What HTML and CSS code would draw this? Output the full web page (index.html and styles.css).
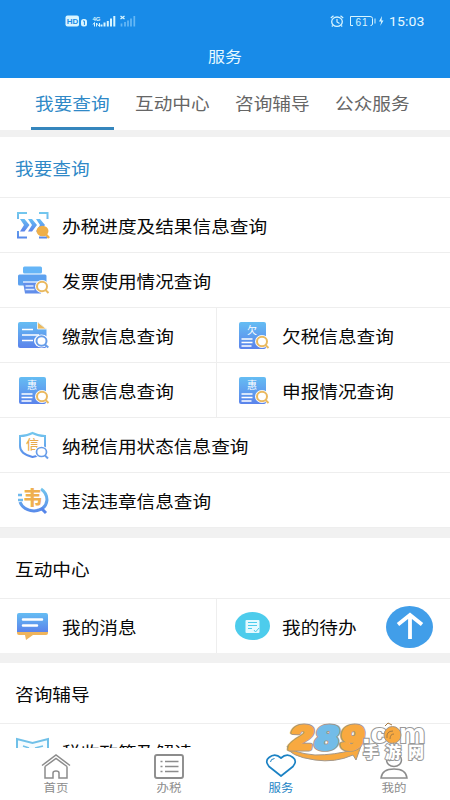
FILE: index.html
```html
<!DOCTYPE html>
<html lang="zh-CN">
<head>
<meta charset="utf-8">
<meta name="viewport" content="width=device-width, initial-scale=1">
<title>服务</title>
<link rel="stylesheet" href="styles.css">
</head>
<body>
<svg class="defs" width="0" height="0">
  <defs>
    <linearGradient id="blue" x1="0" y1="0" x2="0" y2="1"><stop offset="0" stop-color="#65bdf3"/><stop offset="1" stop-color="#5b83eb"/></linearGradient>
    <linearGradient id="line" gradientUnits="userSpaceOnUse" x1="0" y1="2" x2="0" y2="30"><stop offset="0" stop-color="#75cbee"/><stop offset="1" stop-color="#5686ea"/></linearGradient>
    <g id="lens"><ellipse cx="27" cy="22.5" rx="7" ry="6.5" fill="#fff"/><ellipse cx="27" cy="22.5" rx="5" ry="4.7" fill="#fff" stroke="#e9b960" stroke-width="2"/><path d="M30.5 26l3 3" stroke="#e9b960" stroke-width="2"/></g>
    <g id="doc"><rect x="4" y="3" width="27" height="27" rx="2" fill="url(#blue)"/><path d="M6.5 20h11M6.5 23.5h11M6.5 27h10" stroke="#fff" stroke-width="1.5"/><use href="#lens"/></g>
  </defs>
</svg>
<div class="app">
  <header class="top">
    <div class="status">
      <svg class="signals" width="72" height="14" viewBox="0 0 72 14">
        <rect x=".5" y="1.500" width="13.5" height="11" rx="2" fill="#d8f5ff"/>
        <text x="1.7" y="10" class="hd">HD</text>
        <rect x="16" y="5" width="6" height="7.5" rx="2.5" fill="#d8f5ff"/><path d="M18 7h1.4v4" stroke="#188be8" fill="none"/>
        <text x="27.5" y="6.500" class="tiny">4G</text>
        <path d="M28 10.500l1.500-2v4m2 0v-3.500l3 3.500v-3.500" stroke="#d8f5ff" fill="none" stroke-width="1"/>
        <path d="M36.500 12.500v-2M39.500 12.500v-4M42.800 12.500V7M46 12.500V4.500M49.300 12.500V2" stroke="#d8f5ff" stroke-width="2"/>
        <path d="M55.500 2l4 3m0-3l-4 3" stroke="#d8f5ff" stroke-width="1.300"/>
        <path d="M56.500 12.500v-3M60 12.500V8M63 12.500V6.500M66 12.500V4.500M69.300 12.500V2" stroke="#67b8f5" stroke-width="1.700"/>
      </svg>
      <svg class="power" width="55" height="14" viewBox="0 0 55 14" fill="none" stroke="#d8f5ff">
        <ellipse cx="7" cy="7.700" rx="5.300" ry="4.700" stroke-width="1.300"/><path d="M7 5V8l2.500 1.500M.8 4L3.500 1.700M13.200 4L10.500 1.700M2.800 11.500l-1 1M11.200 11.500l1 1" stroke-width="1.200"/>
        <path d="M23 2.500h-2.500v9H23M23 2.500h17q2.500 0 2.500 2v5.500q0 1.500-2 1.500M45 4.500v5"/><text x="25.500" y="11.500" class="battery">61</text>
        <path d="M52 2l-3 5.500h2.200l-1 4.500 3.300-5.500h-2z" fill="#d8f5ff" stroke="none"/>
      </svg>
      <span class="clock">15:03</span>
    </div>
    <h1 class="title"><span class="wide">服务</span></h1>
  </header>
  <nav class="tabs">
    <a class="tab active"><span class="wide">我要查询</span></a>
    <a class="tab"><span class="wide">互动中心</span></a>
    <a class="tab"><span class="wide">咨询辅导</span></a>
    <a class="tab"><span class="wide">公众服务</span></a>
  </nav>
  <main class="content">
    <section class="group first">
      <h2 class="heading current"><span class="wide">我要查询</span></h2>
      <div class="row"><div class="cell">
        <svg class="icon" viewBox="0 0 36 32"><path d="M3 10V4h9M24 4h8.500v6M3 22v6.500h9M24 28.500h8" fill="none" stroke="url(#line)" stroke-width="2"/><path d="M5 10H9.500l5 6-5 6.500H5l4-6.500zM13 10h4l5 6-5 6.500h-4l4-6.500zM21 10h4l5 6-5 6.500h-4l4-6.500z" fill="url(#blue)"/><ellipse cx="27.500" cy="22" rx="6" ry="5.300" fill="#efaf48"/><path d="M30.500 25l3.500 4" stroke="#efaf48" stroke-width="2.500"/></svg>
        <span class="wide">办税进度及结果信息查询</span></div></div>
      <div class="row"><div class="cell">
        <svg class="icon" viewBox="0 0 36 32"><rect x="8" y="2.500" width="19" height="7" rx="1.500" fill="#65b5f7"/><rect x="3" y="10.500" width="28.500" height="11" rx="1.500" fill="#5da1ef"/><path d="M8 18h18v11.500H10z" fill="#628eea"/><path d="M8 18h15M10.500 22h8M10.500 25.500h9" stroke="#dceaff" stroke-width="1.300"/><use href="#lens"/></svg>
        <span class="wide">发票使用情况查询</span></div></div>
      <div class="row split">
        <div class="cell">
          <svg class="icon" viewBox="0 0 36 32"><path d="M5 3h18l8.500 7v17q0 2-2 2H5q-2 0-2-2V5q0-2 2-2z" fill="url(#blue)"/><path d="M22.500 3v7h9z" fill="#e9b960" stroke="#fff" stroke-width=".8"/><path d="M7 10.500h11M7 16h17M7 21.500h11" stroke="#fff" stroke-width="1.700"/><ellipse cx="26.500" cy="22" rx="7.500" ry="6.500" fill="#fff"/><ellipse cx="26.500" cy="22" rx="5" ry="4.700" fill="#fff" stroke="#679de9" stroke-width="2"/><path d="M30 25.500l3.300 3" stroke="#679de9" stroke-width="2"/></svg>
          <span class="wide">缴款信息查询</span></div>
        <div class="cell">
          <svg class="icon" viewBox="0 0 36 32"><use href="#doc"/><text x="12" y="14.500" class="mark">欠</text></svg>
          <span class="wide">欠税信息查询</span></div>
      </div>
      <div class="row split">
        <div class="cell">
          <svg class="icon" viewBox="0 0 36 32"><use href="#doc"/><text x="12" y="14.500" class="mark">惠</text></svg>
          <span class="wide">优惠信息查询</span></div>
        <div class="cell">
          <svg class="icon" viewBox="0 0 36 32"><use href="#doc"/><text x="12" y="14.500" class="mark">惠</text></svg>
          <span class="wide">申报情况查询</span></div>
      </div>
      <div class="row"><div class="cell">
        <svg class="icon" viewBox="0 0 36 32"><path d="M17.500 4Q23 7 30 7v11q0 8-12.500 10Q5 25 5 17V7q7 0 12.500-3z" fill="none" stroke="url(#line)" stroke-width="2"/><text x="11" y="19.500" class="credit">信</text><ellipse cx="26.500" cy="23" rx="7" ry="6" fill="#fff"/><ellipse cx="26.500" cy="23" rx="5" ry="4.500" fill="#fff" stroke="#679de9" stroke-width="1.700"/><path d="M30 26.500l3 3" stroke="#679de9" stroke-width="2"/></svg>
        <span class="wide">纳税信用状态信息查询</span></div></div>
      <div class="row"><div class="cell">
        <svg class="icon" viewBox="0 0 36 32"><path d="M26 5Q32 9 32 16q-1 10-13 11Q8 26 5 18" fill="none" stroke="url(#line)" stroke-width="3"/><path d="M3 11h4M3 16h5" stroke="#6fb9ed" stroke-width="2.500"/><path d="M26 24l5 5" stroke="#5686ea" stroke-width="3"/><text x="8" y="21" class="violate">韦</text></svg>
        <span class="wide">违法违章信息查询</span></div></div>
    </section>
    <section class="group">
      <h2 class="heading"><span class="wide">互动中心</span></h2>
      <div class="row split">
        <div class="cell">
          <svg class="icon" viewBox="0 0 36 32"><path d="M2 19h31v4q0 2-2 2H18l-7 5-1-5H4q-2 0-2-2z" fill="#efb45b"/><path d="M4 3h27q2 0 2 2v17H2V5q0-2 2-2z" fill="url(#blue)"/><path d="M8 9.500h19M8 15.500h14" stroke="#fff" stroke-width="2.500" stroke-linecap="round"/></svg>
          <span class="wide">我的消息</span></div>
        <div class="cell">
          <svg class="icon" viewBox="0 0 36 32"><ellipse cx="17.500" cy="16" rx="17.500" ry="14" fill="#4dccec"/><rect x="10.500" y="10" width="14" height="13" rx="1" fill="#e4faff"/><path d="M13 12.500h9M13 15.500h9M13 18.500h4M19 20l1.500 2 3.500-4" stroke="#4dccec" fill="none" stroke-width="1"/></svg>
          <span class="wide">我的待办</span></div>
      </div>
    </section>
    <section class="group">
      <h2 class="heading"><span class="wide">咨询辅导</span></h2>
      <div class="row"><div class="cell">
        <svg class="icon" viewBox="0 0 36 32"><path d="M2 28V4l15.500 4L33 4v24l-15.500 2z" fill="#f5fcff" stroke="#70c0e8" stroke-width="2"/><path d="M8 11l6 2M28 11l-8 2" stroke="#70c0e8" stroke-width="1.500"/></svg>
        <span class="wide">税收政策及解读</span></div></div>
    </section>
  </main>
  <footer class="bottom">
    <a class="item"><svg class="glyph" viewBox="0 0 32 26"><path d="M2 12.500L16 2l14 10.500M5 13.500V25h8v-5q0-2 3-2t3 2v5h8V13.500M5 13.500L16 5.500l11 8" fill="none" stroke="currentColor" stroke-width="1.500"/></svg><span class="wide">首页</span></a>
    <a class="item"><svg class="glyph" viewBox="0 0 32 26"><rect x="2" y="2" width="28" height="23" rx="2" fill="none" stroke="currentColor" stroke-width="1.900"/><path d="M7.500 8.500h2M12 8.500h13.500M7.500 13.500h2M12 13.500h13.500M7.500 18.500h2M12 18.500h13.500" stroke="currentColor" stroke-width="1.500"/></svg><span class="wide">办税</span></a>
    <a class="item on"><svg class="glyph" viewBox="0 0 32 26"><path d="M16 23L4 13.500Q-.500 8 4 4.500 10-.500 16 5q6-5.500 12-.500 4.500 3.500 0 9z" fill="none" stroke="currentColor" stroke-width="1.700" stroke-linejoin="round"/><path d="M5.500 9q0-3 4-3.500" fill="none" stroke="currentColor"/></svg><span class="wide">服务</span></a>
    <a class="item"><svg class="glyph" viewBox="0 0 32 26"><ellipse cx="16" cy="7" rx="7.500" ry="6.500" fill="none" stroke="currentColor" stroke-width="1.500"/><path d="M3 25q1-9 13-9t13 9z" fill="none" stroke="currentColor" stroke-width="1.500"/></svg><span class="wide">我的</span></a>
  </footer>
  <button class="to-top" aria-label="返回顶部"><svg width="47" height="42" viewBox="0 0 47 42"><ellipse cx="23.500" cy="21" rx="23.500" ry="21" fill="#419ee9"/><path d="M24 33V9M12 18.500L24 9l12 9.500" fill="none" stroke="#fff" stroke-width="3.800"/></svg></button>
  <svg class="brand" width="144" height="42" viewBox="0 0 144 42">
    <path d="M2 24q6 7 28 9 20 0 37-5l-3-3 12-1-5 14-3-5Q50 41 30 38 3 34 2 24z" fill="#f8a940" stroke="#a49788"/>
    <g transform="translate(3.500 26.500) skewX(-10) scale(1.220 1)">
      <g class="digits rim"><text>289</text></g>
      <g class="digits"><text><tspan class="amber">2</tspan><tspan class="sky">8</tspan><tspan class="amber">9</tspan></text></g>
    </g>
    <g transform="translate(77 21) scale(1.150 1)"><text class="com">.c</text></g>
    <g transform="translate(114 21) scale(1.100 1)"><text class="com">m</text></g>
    <ellipse cx="107.500" cy="13" rx="8.500" ry="8.500" fill="#f8a940" stroke="#a49788"/><path d="M102 16q-1-7 6-7M105 17q0-5 4-5M100 4l3-3 4 2" fill="none" stroke="#a67a42"/>
    <text y="36" class="site"><tspan x="78">手</tspan><tspan x="100">游</tspan><tspan x="123">网</tspan></text>
  </svg>
</div>
</body>
</html>
```

FILE: styles.css
```css
* { box-sizing: border-box; }
body { margin: 0; background: #fff; font-family: "Noto Sans CJK SC", sans-serif; }
.defs { position: absolute; }
.app { position: relative; width: 450px; height: 800px; overflow: hidden; display: flex; flex-direction: column; color: #080808; font-size: 16.5px; }
.wide { display: inline-block; transform: scaleX(1.13); transform-origin: left center; white-space: nowrap; line-height: 24px; }

.top { height: 78px; flex: none; background: #188be8; color: #e6f9ff; }
.status { height: 43px; padding: 14px 25px 0 65px; display: flex; align-items: flex-start; }
.signals { margin-right: auto; }
.power { margin-right: 4px; }
.clock { width: 36px; font: 13px/16px Roboto, sans-serif; letter-spacing: .1px; transform: scaleX(1.08); transform-origin: left; }
.hd { font: bold 8px "Liberation Sans", sans-serif; fill: #188be8; }
.tiny { font: bold 6px "Liberation Sans", sans-serif; fill: #d8f5ff; }
.battery { font: 10px "Liberation Sans", sans-serif; fill: #d8f5ff; stroke: none; letter-spacing: 1px; }
.title { margin: 0; font-size: 15px; font-weight: 400; line-height: 26px; text-align: center; }
.title .wide, .item .wide { transform-origin: center; }

.tabs { height: 52px; flex: none; padding-left: 31px; display: flex; gap: 17px; color: #666; }
.tab { width: 83px; padding: 13px 0 0 4px; border-bottom: 3px solid transparent; }
.tab.active { color: #3089c7; border-color: #3586bd; }

.content { flex: 1; min-height: 0; overflow: hidden; background: #f1f1f1; padding-top: 7px; display: flex; flex-direction: column; gap: 10px; }
.group { flex: none; background: #fff; }
.group.first { border-bottom: 1px solid #eee; }
.heading { margin: 0; height: 60px; padding: 19px 15px 0; font-size: inherit; font-weight: 400; }
.current { color: #3089c7; }
.row { height: 55px; border-top: 1px solid #eee; display: flex; }
.cell { flex: 1; display: flex; align-items: center; padding-left: 15px; }
.cell .wide { margin-top: 1px; }
.split .cell:first-child { flex: 0 0 217px; border-right: 1px solid #eee; }
.split .cell + .cell { padding-left: 18px; }
.icon { width: 36px; height: 32px; margin-right: 10.500px; flex: none; }
.mark { font-size: 10px; fill: #fff; }
.credit { font-size: 13px; font-weight: 500; fill: #e9aa4c; }
.violate { font-size: 19px; font-weight: 900; fill: #efb050; }

.bottom { height: 52px; flex: none; background: #fff; display: flex; color: #8c8c8c; font-size: 11px; }
.item { flex: 1; display: flex; flex-direction: column; align-items: center; padding-top: 5px; }
.item .wide { line-height: 16px; }
.glyph { width: 32px; height: 26px; }
.on { color: #1b82c4; }

.to-top { position: absolute; left: 386px; top: 606px; width: 47px; height: 42px; padding: 0; border: 0; background: none; }
.to-top svg { display: block; }
.brand { position: absolute; left: 285px; top: 722px; overflow: visible; }
.digits { font: bold 33px "Liberation Sans", sans-serif; letter-spacing: 2.500px; stroke-width: 3.200px; stroke-linejoin: round; }
.rim { fill: #a49788; stroke: #a49788; stroke-width: 5px; }
.amber { fill: #f8a940; stroke: #f8a940; }
.sky { fill: #72bce8; stroke: #72bce8; }
.com { font: bold 27px "Liberation Sans", sans-serif; fill: #fff; stroke: #999; stroke-width: 2px; paint-order: stroke; }
.site { font-size: 16px; font-weight: 900; fill: #fff; stroke: #999; stroke-width: 2px; paint-order: stroke; }
```
